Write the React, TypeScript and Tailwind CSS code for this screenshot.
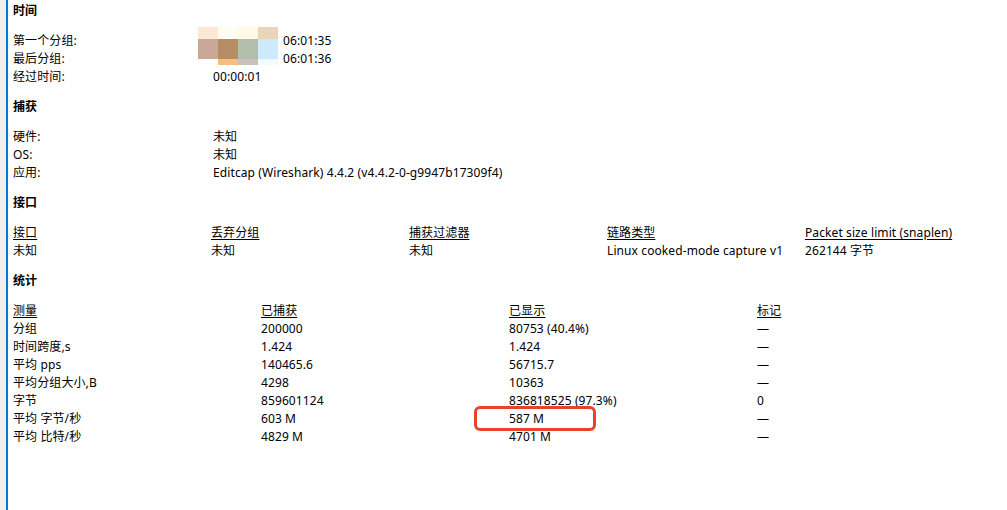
const font = {
  fontFamily: '"Segoe UI", "Noto Sans", "Noto Sans CJK SC", sans-serif',
};

function Heading({ children }: { children: string }) {
  return <div className="h-[18px] leading-[18px] font-bold">{children}</div>;
}

function KV({ label, value }: { label: string; value: React.ReactNode }) {
  return (
    <div className="flex h-[18px] leading-[18px]">
      <div className="w-[200px] shrink-0">{label}</div>
      <div>{value}</div>
    </div>
  );
}

const interfaceHead = ["接口", "丢弃分组", "捕获过滤器", "链路类型", "Packet size limit (snaplen)"];
const interfaceRow = ["未知", "未知", "未知", "Linux cooked-mode capture v1", "262144 字节"];

const statHead = ["测量", "已捕获", "已显示", "标记"];
const statRows = [
  ["分组", "200000", "80753 (40.4%)", "—"],
  ["时间跨度,s", "1.424", "1.424", "—"],
  ["平均 pps", "140465.6", "56715.7", "—"],
  ["平均分组大小,B", "4298", "10363", "—"],
  ["字节", "859601124", "836818525 (97.3%)", "0"],
  ["平均 字节/秒", "603 M", "587 M", "—"],
  ["平均 比特/秒", "4829 M", "4701 M", "—"],
];

// blurred thumbnail colours, 4 cols x 3 rows
const blur = [
  ["#fde8d6", "#fffcf2", "#fffbe6", "#ead5bb"],
  ["#caa897", "#b58d66", "#b4bead", "#cde9fc"],
  ["#ffffff", "#f7bd80", "#c8c0bb", "#f2fbff"],
];

export default function App() {
  return (
    <div className="flex h-[510px] w-[1007px] bg-white text-[12px] text-black tracking-[0.1px]" style={font}>
      <div className="w-[6px] shrink-0 bg-[#f0f0f0]" />
      <div className="w-[2px] shrink-0 bg-[#0078d7]" />
      <div className="relative flex-1 pl-[5px] pt-[2px]">
        {/* 时间 */}
        <Heading>时间</Heading>
        <div className="mt-3">
          <KV label="第一个分组:" value={<span className="pl-[70px]">06:01:35</span>} />
          <KV label="最后分组:" value={<span className="pl-[70px]">06:01:36</span>} />
          <KV label="经过时间:" value="00:00:01" />
        </div>

        {/* 捕获 */}
        <div className="mt-3">
          <Heading>捕获</Heading>
        </div>
        <div className="mt-3">
          <KV label="硬件:" value="未知" />
          <KV label="OS:" value="未知" />
          <KV label="应用:" value="Editcap (Wireshark) 4.4.2 (v4.4.2-0-g9947b17309f4)" />
        </div>

        {/* 接口 */}
        <div className="mt-3">
          <Heading>接口</Heading>
        </div>
        <div className="mt-3">
          <div className="flex h-[18px] leading-[18px]">
            {interfaceHead.map((h) => (
              <div key={h} className="w-[198px] shrink-0">
                <span className="underline underline-offset-2">{h}</span>
              </div>
            ))}
          </div>
          <div className="flex h-[18px] leading-[18px]">
            {interfaceRow.map((v, i) => (
              <div key={i} className="w-[198px] shrink-0 whitespace-nowrap">
                {v}
              </div>
            ))}
          </div>
        </div>

        {/* 统计 */}
        <div className="mt-3">
          <Heading>统计</Heading>
        </div>
        <div className="mt-3">
          <div className="flex h-[18px] leading-[18px]">
            {statHead.map((h) => (
              <div key={h} className="w-[248px] shrink-0">
                <span className="underline underline-offset-2">{h}</span>
              </div>
            ))}
          </div>
          {statRows.map((r) => (
            <div key={r[0]} className="flex h-[18px] leading-[18px]">
              {r.map((v, i) => (
                <div key={i} className="w-[248px] shrink-0 whitespace-nowrap">
                  {v}
                </div>
              ))}
            </div>
          ))}
        </div>

        {/* blurred thumbnail */}
        <div className="absolute left-[190px] top-[27px] flex flex-col">
          {blur.map((row, ri) => (
            <div key={ri} className={ri === 0 ? "flex h-[12px]" : ri === 1 ? "flex h-[20px]" : "flex h-[6px]"}>
              {row.map((c, ci) => (
                <div key={ci} className="w-[20px]" style={{ backgroundColor: c }} />
              ))}
            </div>
          ))}
        </div>

        {/* red highlight */}
        <div className="absolute left-[466px] top-[406px] h-[25px] w-[122px] rounded-[6px] border-[3px] border-[#e8412c]" />
      </div>
    </div>
  );
}
